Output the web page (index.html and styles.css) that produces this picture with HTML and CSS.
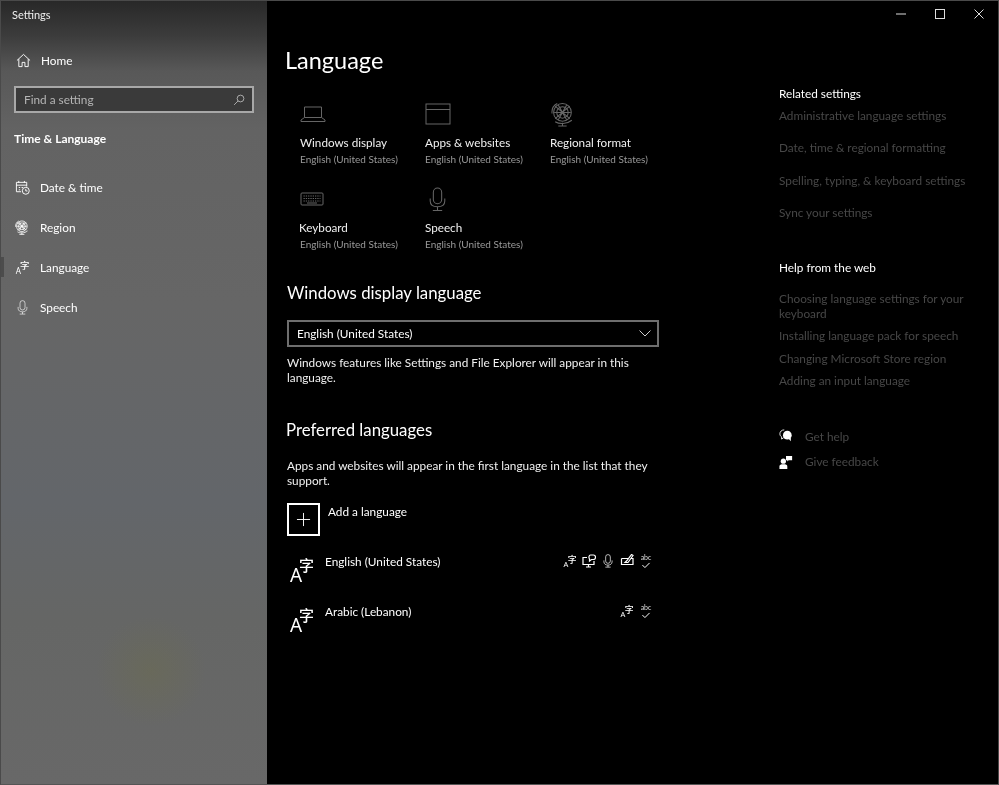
FILE: index.html
```html
<!DOCTYPE html>
<html lang="en">
<head>
<meta charset="utf-8">
<title>Settings</title>
<link rel="stylesheet" href="styles.css">
</head>
<body>
<svg class="defs" aria-hidden="true">
  <symbol id="i-home" viewBox="0 0 16 16"><path d="M1 8 8 1.5 15 8M3 6.5V14.5H6.5V10H9.5V14.5H13V6.5"/></symbol>
  <symbol id="i-search" viewBox="0 0 16 16"><circle cx="10" cy="6" r="4.5"/><path d="M6.8 9.2 1.5 14.5"/></symbol>
  <symbol id="i-cal" viewBox="0 0 16 16"><path d="M6.5 12.5H1.5V2.5H12.5V7M1.5 5.5H12.5M4 1V3M10 1V3M4 8H5.5M7 8H8.5M4 10.5H5.5"/><circle cx="11.5" cy="11.5" r="3.7"/><path d="M11.5 9.5V11.7H13.3"/></symbol>
  <symbol id="i-globe" viewBox="0 0 24 24"><circle cx="11" cy="10" r="8.5"/><circle cx="11" cy="10" r="5.5"/><path d="M4 4 18 16M18 4 4 16M7 3 15 17M15 3 7 17M3 10H19M6 1.5C3 3 0.5 6.500 1 11M4 19C8 21.500 15 21.500 20 17.500M11 20V23M7 23H15"/></symbol>
  <symbol id="i-mic" viewBox="0 0 16 24"><rect x="4" y="1" width="8" height="15" rx="4"/><path d="M1 11V13.500C1 17 4 19 8 19S15 17 15 13.500V11M8 19V22.500M3.500 22.500H12.500"/></symbol>
  <symbol id="i-laptop" viewBox="0 0 26 16"><path d="M4.500 11.500V1H21.500V11.500M4.500 11.500 1 14V15.500H25V14L21.500 11.500Z"/></symbol>
  <symbol id="i-window" viewBox="0 0 26 22"><rect x="1" y="1" width="24" height="20"/><path d="M1 6.500H25"/></symbol>
  <symbol id="i-keys" viewBox="0 0 24 14"><rect x="1" y="1" width="22" height="12" rx="1"/><path d="M3.500 4H20.500M3.500 6.500H20.500M3.500 9H20.500" stroke-dasharray="1.300 1"/><path d="M7 11H17"/></symbol>
  <symbol id="i-plus" viewBox="0 0 16 16"><path d="M1 8H15M8 1V15"/></symbol>
  <symbol id="i-display" viewBox="0 0 14 14"><path d="M5 3.500H1V10.500H12V7M4 13H9M6.500 10.500V13"/><path d="M8.500 1H11.500C13 1 13.500 2 13.500 3.200S13 5.500 11.500 5.500H9.500L7.500 7V5C6.500 3.500 7 1 8.500 1Z"/></symbol>
  <symbol id="i-hand" viewBox="0 0 14 14"><path d="M1.500 4.500H8M11 4.500H13V10.500H1.500V4.500M5 8.500 8 8.500 13 1.500 11.500 .5 7 6.500Z"/></symbol>
  <symbol id="i-check" viewBox="0 0 14 14"><path d="M2 8.500 5.500 12 12 5.500"/></symbol>
  <symbol id="i-help" viewBox="0 0 16 16"><path d="M6 1C3 1 1 3 1 5.500 1 7 1.800 8.300 3 9V11.500L5.500 9.800"/><circle class="solid" cx="9.500" cy="7" r="5"/><path class="solid" d="M11 11 13.500 14V10Z"/></symbol>
  <symbol id="i-feedback" viewBox="0 0 16 16"><circle class="solid" cx="5" cy="7" r="3"/><path class="solid" d="M0.500 16V13C0.500 11 2 10.500 5 10.500S9.500 11 9.500 13V16Z"/><path class="solid" d="M8 1H15V6H11L9.500 7.500V6H8Z"/></symbol>
</svg>

<div class="window">
  <aside class="sidebar">
    <div class="app-title">Settings</div>
    <a class="side-row home"><svg class="ic16"><use href="#i-home"/></svg><span>Home</span></a>
    <div class="search"><span>Find a setting</span><svg class="ic12"><use href="#i-search"/></svg></div>
    <div class="side-heading">Time &amp; Language</div>
    <nav class="side-nav">
      <a class="side-row"><svg class="ic16"><use href="#i-cal"/></svg><span>Date &amp; time</span></a>
      <a class="side-row"><svg class="ic16 thick"><use href="#i-globe"/></svg><span>Region</span></a>
      <a class="side-row active"><svg class="ic16" viewBox="0 0 24 24"><text><tspan class="lang-a" x="1" y="23" font-size="13">A</tspan><tspan class="lang-zi" x="8" y="15" font-size="15">字</tspan></text></svg><span>Language</span></a>
      <a class="side-row"><svg class="ic16"><use href="#i-mic"/></svg><span>Speech</span></a>
    </nav>
  </aside>

  <section class="pane">
    <header class="controls">
      <svg class="ctl" viewBox="0 0 10 10"><path d="M0 5H10"/></svg>
      <svg class="ctl" viewBox="0 0 10 10"><rect x="0.500" y="0.500" width="9" height="9"/></svg>
      <svg class="ctl" viewBox="0 0 10 10"><path d="M0.500 0.500 9.500 9.500M9.500 0.500 0.500 9.500"/></svg>
    </header>
    <div class="pane-body">
      <main class="content">
        <h1>Language</h1>
        <div class="tiles">
          <div class="tile"><div class="tile-ic"><svg class="laptop"><use href="#i-laptop"/></svg></div><b>Windows display</b><small>English (United States)</small></div>
          <div class="tile"><div class="tile-ic"><svg class="winbox"><use href="#i-window"/></svg></div><b>Apps &amp; websites</b><small>English (United States)</small></div>
          <div class="tile"><div class="tile-ic"><svg class="globe"><use href="#i-globe"/></svg></div><b>Regional format</b><small>English (United States)</small></div>
          <div class="tile"><div class="tile-ic"><svg class="keys"><use href="#i-keys"/></svg></div><b class="kb">Keyboard</b><small>English (United States)</small></div>
          <div class="tile"><div class="tile-ic"><svg class="mic"><use href="#i-mic"/></svg></div><b>Speech</b><small>English (United States)</small></div>
        </div>

        <h2 class="h-display">Windows display language</h2>
        <div class="select"><span>English (United States)</span><svg class="chev" viewBox="0 0 12 7"><path d="M0.500 0.500 6 6 11.500 0.500"/></svg></div>
        <p class="note">Windows features like Settings and File Explorer will appear in this language.</p>

        <h2 class="h-pref">Preferred languages</h2>
        <p class="note">Apps and websites will appear in the first language in the list that they support.</p>
        <div class="add">
          <div class="add-box"><svg class="plus"><use href="#i-plus"/></svg></div>
          <span>Add a language</span>
        </div>
        <div class="lang-row">
          <svg class="lang-big" viewBox="0 0 24 24"><text><tspan class="lang-a" x="0" y="25" font-size="19">A</tspan><tspan class="lang-zi" x="9" y="14" font-size="15">字</tspan></text></svg>
          <span class="lang-name">English (United States)</span>
          <div class="caps">
            <svg class="cap" viewBox="0 0 24 24"><text><tspan class="lang-a" x="1" y="23" font-size="13">A</tspan><tspan class="lang-zi" x="8" y="15" font-size="15">字</tspan></text></svg>
            <svg class="cap"><use href="#i-display"/></svg>
            <svg class="cap"><use href="#i-mic"/></svg>
            <svg class="cap"><use href="#i-hand"/></svg>
            <span class="spell"><i>abc</i><svg class="spell-ic"><use href="#i-check"/></svg></span>
          </div>
        </div>
        <div class="lang-row">
          <svg class="lang-big" viewBox="0 0 24 24"><text><tspan class="lang-a" x="0" y="25" font-size="19">A</tspan><tspan class="lang-zi" x="9" y="14" font-size="15">字</tspan></text></svg>
          <span class="lang-name">Arabic (Lebanon)</span>
          <div class="caps">
            <svg class="cap" viewBox="0 0 24 24"><text><tspan class="lang-a" x="1" y="23" font-size="13">A</tspan><tspan class="lang-zi" x="8" y="15" font-size="15">字</tspan></text></svg>
            <span class="spell"><i>abc</i><svg class="spell-ic"><use href="#i-check"/></svg></span>
          </div>
        </div>
      </main>

      <aside class="related">
        <h3>Related settings</h3>
        <ul class="links first">
          <li>Administrative language settings</li>
          <li>Date, time &amp; regional formatting</li>
          <li>Spelling, typing, &amp; keyboard settings</li>
          <li>Sync your settings</li>
        </ul>
        <h3 class="help-h">Help from the web</h3>
        <ul class="links web">
          <li>Choosing language settings for your keyboard</li>
          <li>Installing language pack for speech</li>
          <li>Changing Microsoft Store region</li>
          <li>Adding an input language</li>
        </ul>
        <div class="support">
          <div class="sup-row"><svg class="ic16"><use href="#i-help"/></svg><span>Get help</span></div>
          <div class="sup-row"><svg class="ic16"><use href="#i-feedback"/></svg><span>Give feedback</span></div>
        </div>
      </aside>
    </div>
  </section>
</div>
</body>
</html>
```

FILE: styles.css
```css
* { box-sizing: border-box; }
html, body { margin: 0; height: 100%; background: #000; }
body { font-family: Lato, "Noto Sans", sans-serif; font-size: 11.8px; color: #fff; overflow: hidden; }
.defs { display: none; }
svg { fill: none; stroke: currentColor; stroke-width: 1; flex: none; overflow: visible; }
svg .solid, symbol .solid { fill: currentColor; stroke: none; }
svg text { stroke: none; fill: currentColor; }
.lang-a { font-family: "Noto Sans", sans-serif; }
.lang-zi { font-family: "Noto Sans CJK SC", sans-serif; font-weight: 500; }

.window { display: flex; width: 999px; height: 785px; border: 1px solid #4a4a4a; border-bottom-color: #555; background: #000; filter: blur(.3px); }

.sidebar {
  width: 266px; flex: none; color: #fff;
  background:
    radial-gradient(circle 55px at 150px 670px, rgba(110,110,70,.35), rgba(110,110,70,0)),
    linear-gradient(180deg, #282828 0, #3c3c3c 35px, #585858 70px, #636363 130px, #666 300px, #63666a 500px, #656665 620px, #686868 785px);
}
.app-title { height: 29px; padding: 6px 0 0 11px; font-size: 11px; line-height: 15px; color: #eee; }
.side-row { display: flex; align-items: center; height: 40px; padding-left: 14px; gap: 10px; font-size: 11.8px; position: relative; }
.side-row .ic16 { width: 15px; height: 15px; }
.thick { stroke-width: 1.300; }
.home { margin-top: 10px; padding-left: 15px; }
.search { display: flex; align-items: center; justify-content: space-between; height: 27px; margin: 6px 13px 0 13px; padding: 0 7px 0 8px; background: #3a3a3a; border: 2px solid #a8a8a8; color: #b5b5b5; font-size: 11.8px; }
.ic12 { width: 12px; height: 12px; color: #ccc; }
.side-heading { margin: 16px 0 0 13px; height: 21px; font-size: 12px; line-height: 20px; font-weight: 700; }
.side-nav { margin-top: 17px; }
.active::before { content: ""; position: absolute; left: 0; top: 10px; width: 3px; height: 20px; background: #4c4c4c; }

.pane { flex: 1; display: flex; flex-direction: column; min-width: 0; }
.controls { display: flex; justify-content: flex-end; align-items: center; height: 26px; padding-right: 14px; gap: 29px; color: #ddd; }
.ctl { width: 10px; height: 10px; }

.pane-body { display: flex; flex: 1; }
.content { width: 512px; flex: none; padding-left: 18px; }
h1 { margin: 16px 0 0; font-size: 23.500px; line-height: 34px; font-weight: 400; }
.tiles { display: grid; grid-template-columns: repeat(3, 125px); grid-auto-rows: 85px; margin: 25px 0 0 15px; }
.tile { display: flex; flex-direction: column; }
.tile-ic { height: 22px; margin: 1px 0 9px; color: #666; display: flex; align-items: center; }
.laptop { width: 26px; height: 16px; }
.winbox { width: 26px; height: 22px; }
.globe { width: 25px; height: 25px; margin-left: 1px; }
.keys { width: 24px; height: 14px; }
.mic { width: 17px; height: 25px; margin-left: 4px; }
.tile b { font-weight: 400; font-size: 11.700px; line-height: 17px; color: #f0f0f0; }
.tile .kb { margin-left: -1px; }
.tile small { font-size: 10px; line-height: 16px; color: #999; }

h2 { font-size: 16.800px; line-height: 24px; font-weight: 400; margin: 0; }
.h-display { margin: 9px 0 0 2px; }
.select { display: flex; align-items: center; justify-content: space-between; width: 372px; height: 27px; margin: 15px 0 0 2px; padding: 0 6px 0 8px; border: 2px solid #6e6e6e; }
.chev { width: 12px; height: 7px; color: #ccc; }
.note { width: 372px; margin: 8px 0 0 2px; line-height: 15px; color: #f0f0f0; }
.h-pref { margin: 33px 0 0 1px; }
.h-pref + .note { margin-top: 16px; }
.add { display: flex; align-items: flex-start; gap: 8px; margin: 15px 0 0 2px; }
.add-box { display: flex; align-items: center; justify-content: center; width: 33px; height: 33px; border: 2px solid #fff; }
.plus { width: 15px; height: 15px; }
.add span { line-height: 17px; }
.lang-row { display: flex; align-items: flex-start; width: 363px; height: 50px; margin-left: 5px; }
.add + .lang-row { margin-top: 21px; }
.lang-big { width: 24px; height: 24px; }
.lang-name { margin: -4px 0 0 11px; line-height: 17px; }
.caps { margin: -3px 0 0 auto; display: flex; gap: 5px; align-items: flex-start; }
.cap { width: 14px; height: 14px; stroke-width: 1.200; }
.spell { display: flex; flex-direction: column; align-items: center; width: 14px; height: 14px; }
.spell i { font-style: normal; font-size: 7px; line-height: 7px; color: #ddd; }
.spell-ic { width: 10px; height: 10px; margin-top: -2px; stroke-width: 1.400; }

.related { width: 200px; }
h3 { margin: 58px 0 0; font-size: 11.800px; line-height: 17px; font-weight: 400; }
.links { list-style: none; margin: 0; padding: 0; color: #474747; }
.links li { line-height: 15px; }
.first { margin-top: 6px; }
.first li { margin-bottom: 17.300px; }
.help-h { margin-top: 39.500px; }
.web { margin-top: 15px; }
.web li { margin-bottom: 7.100px; }
.support { margin-top: 36px; }
.sup-row { display: flex; align-items: center; height: 25.500px; gap: 12px; color: #474747; }
.sup-row svg { width: 14px; height: 14px; color: #fff; }
```
